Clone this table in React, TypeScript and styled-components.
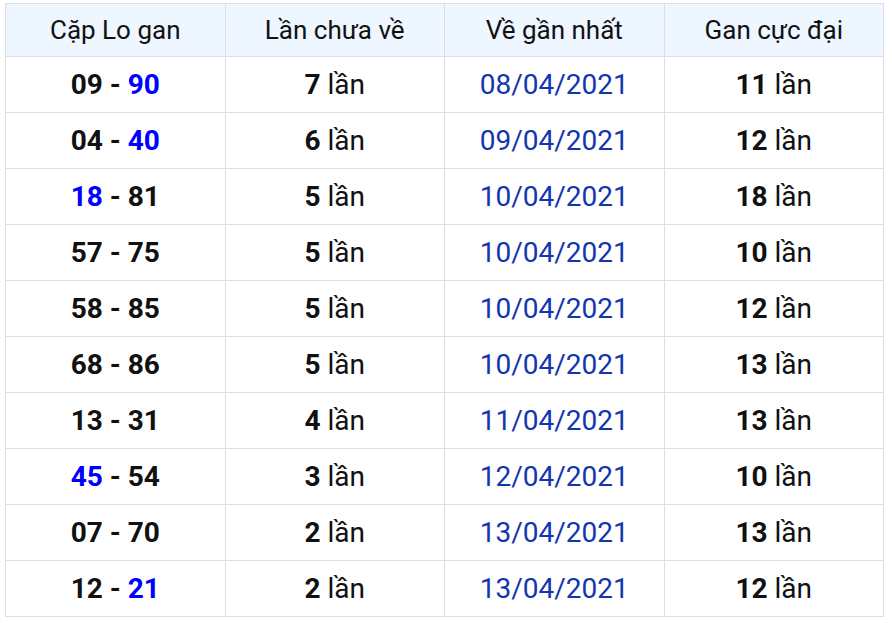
import * as React from "react";
import styled, { createGlobalStyle } from "styled-components";

const GlobalStyles = createGlobalStyle`
  body {
    margin: 0;
    background: #ffffff;
    font-family: Roboto, "Noto Sans", Arial, sans-serif;
  }
`;

interface Row {
  a: string;
  b: string;
  blue: "a" | "b" | null;
  count: number;
  last: string;
  max: number;
}

const rows: Row[] = [
  { a: "09", b: "90", blue: "b", count: 7, last: "08/04/2021", max: 11 },
  { a: "04", b: "40", blue: "b", count: 6, last: "09/04/2021", max: 12 },
  { a: "18", b: "81", blue: "a", count: 5, last: "10/04/2021", max: 18 },
  { a: "57", b: "75", blue: null, count: 5, last: "10/04/2021", max: 10 },
  { a: "58", b: "85", blue: null, count: 5, last: "10/04/2021", max: 12 },
  { a: "68", b: "86", blue: null, count: 5, last: "10/04/2021", max: 13 },
  { a: "13", b: "31", blue: null, count: 4, last: "11/04/2021", max: 13 },
  { a: "45", b: "54", blue: "a", count: 3, last: "12/04/2021", max: 10 },
  { a: "07", b: "70", blue: null, count: 2, last: "13/04/2021", max: 13 },
  { a: "12", b: "21", blue: "b", count: 2, last: "13/04/2021", max: 12 },
];

const Wrapper = styled.div`
  padding: 3px 0 0 5px;
`;

const Table = styled.table`
  width: 879px;
  border-collapse: collapse;
  table-layout: fixed;
  font-family: Roboto, "Noto Sans", Arial, sans-serif;
  font-size: 28px;
  color: #111;
`;

const HeadCell = styled.th`
  height: 52px;
  padding: 0;
  background: #eef6ff;
  border: 1px solid #dcdee6;
  font-weight: 400;
  font-size: 26px;
  text-align: center;
  color: #111;
`;

const Cell = styled.td`
  height: 55px;
  padding: 0;
  border: 1px solid #dcdee6;
  text-align: center;
`;

const Num = styled.b<{ $blue?: boolean }>`
  font-weight: 700;
  color: ${(p) => (p.$blue ? "#0000ff" : "#111")};
`;

const DateText = styled.span`
  color: #1236b0;
`;

export default function App() {
  return (
    <Wrapper>
      <GlobalStyles />
      <Table>
        <thead>
          <tr>
            <HeadCell>Cặp Lo gan</HeadCell>
            <HeadCell>Lần chưa về</HeadCell>
            <HeadCell>Về gần nhất</HeadCell>
            <HeadCell>Gan cực đại</HeadCell>
          </tr>
        </thead>
        <tbody>
          {rows.map((r, i) => (
            <tr key={i}>
              <Cell>
                <Num $blue={r.blue === "a"}>{r.a}</Num> <Num>-</Num>{" "}
                <Num $blue={r.blue === "b"}>{r.b}</Num>
              </Cell>
              <Cell>
                <Num>{r.count}</Num> lần
              </Cell>
              <Cell>
                <DateText>{r.last}</DateText>
              </Cell>
              <Cell>
                <Num>{r.max}</Num> lần
              </Cell>
            </tr>
          ))}
        </tbody>
      </Table>
    </Wrapper>
  );
}
